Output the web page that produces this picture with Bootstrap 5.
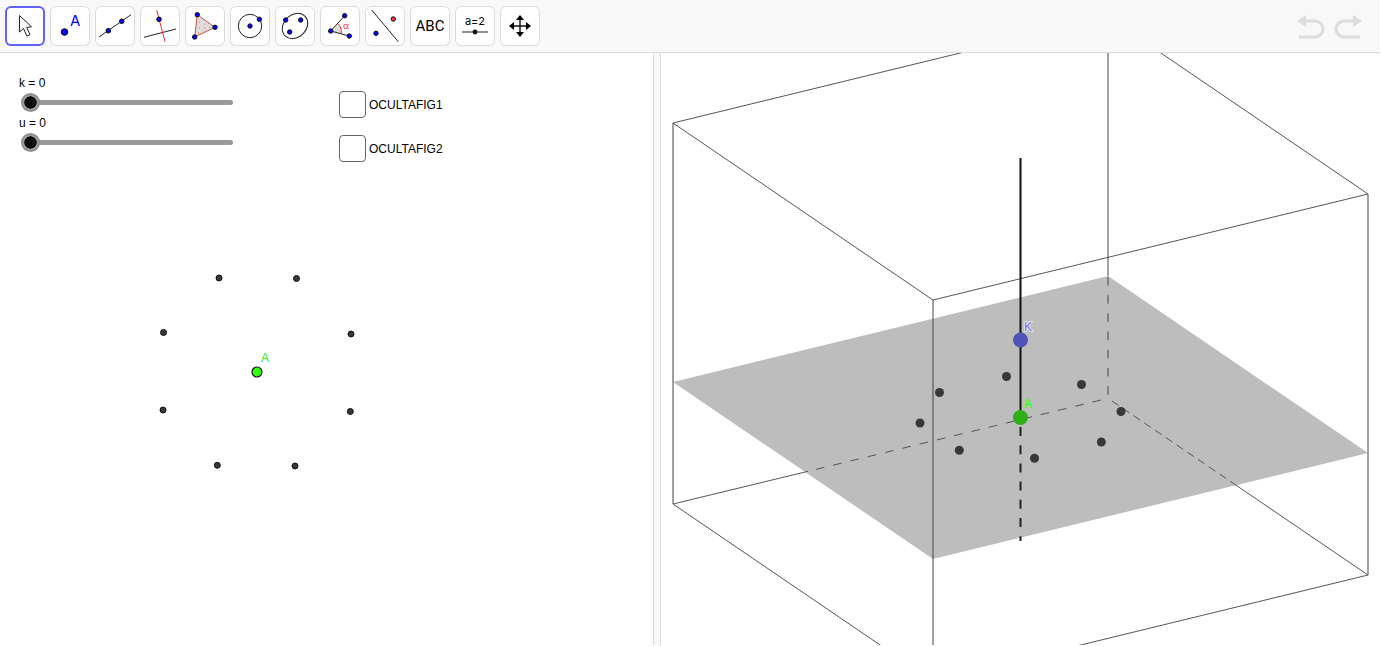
<!DOCTYPE html>
<html lang="es">
<head>
<meta charset="utf-8">
<meta name="viewport" content="width=device-width, initial-scale=1">
<title>Vista gráfica y 3D</title>
<link href="https://cdn.jsdelivr.net/npm/bootstrap@5.3.0/dist/css/bootstrap.min.css" rel="stylesheet">
<style>
  body { font-family: "Liberation Sans", Arial, sans-serif; font-size: 12px; line-height: 16px; color: #000; background: #fff; }
  .workspace { height: 100vh; padding: 0 2px 2px 0; }
  .toolbar { background: #f8f8f8; border-bottom: 1px solid #dcdcdc; padding: 6px 18px 6px 5px; }
  .tools { gap: 5px; }
  .tool { width: 40px; height: 40px; border: 0; border-radius: 6px; background: #fff; box-shadow: inset 0 0 0 1px #dcdcdc; }
  .tool.selected { box-shadow: inset 0 0 0 2px #6161ff; }
  .tool svg { width: 40px; height: 40px; display: block; }
  .tool text { font-family: Roboto, sans-serif; }
  .tool .point-name { font-family: Inter, sans-serif; }
  .history { gap: 9px; padding-top: 2px; }
  .history button { border: 0; background: none; }
  .history svg { display: block; }
  .ink { stroke: #222; fill: none; stroke-width: 1; }
  .dot { fill: #00f; stroke: #111; stroke-width: 1; }
  .view2d { flex: 653 1 0; overflow: hidden; }
  .view3d { flex: 719 1 0; overflow: hidden; }
  .splitter { width: 8px; background: #f8f8f8; border: solid #dcdcdc; border-width: 0 1px; }
  .views { min-height: 0; }
  .board { position: absolute; inset: 0; width: 100%; height: 100%; pointer-events: none; }
  .controls { position: relative; padding: 22px 19px; gap: 106px; }
  .sliders { width: 214px; gap: 3px; }
  .slider { -webkit-appearance: none; appearance: none; display: block; width: 211px; height: 19px; margin: 2px 0 0 3px; padding: 0; background: none; }
  .slider::-webkit-slider-runnable-track { height: 5px; border-radius: 3px; background: #999; }
  .slider::-webkit-slider-thumb { -webkit-appearance: none; width: 17px; height: 17px; margin-top: -6px; border-radius: 50%; border: 2px solid #999; background: #0a0a0a; background-clip: padding-box; box-shadow: 0 0 0 1px #888; }
  .checks { gap: 17px; padding-top: 16px; }
  .check-row { gap: 3px; }
  .tick { -webkit-appearance: none; appearance: none; width: 27px; height: 27px; margin: 0; border: 1px solid #666; border-radius: 4px; background: #fff; }
  .tick:checked { background: #999; }
  .edge { stroke: #555; stroke-width: 1; fill: none; }
  .upright { stroke: #444; }
</style>
</head>
<body>
<div class="workspace d-flex flex-column">
  <header class="toolbar d-flex align-items-center justify-content-between">
    <div class="tools d-flex" role="toolbar" aria-label="Herramientas">
      <button class="tool selected p-0" aria-label="Elige y mueve"><svg viewBox="0 0 40 40"><path class="ink" stroke-width="1.2" d="M14.5 9.5V26l4-3.5 3.4 7.6 3.1-1.4-3.3-7.3 4.8-.6z"/></svg></button>
      <button class="tool p-0" aria-label="Punto"><svg viewBox="0 0 40 40"><circle class="dot" cx="14.5" cy="26" r="3.3"/><text class="point-name" x="20" y="20" font-size="15" fill="#00f">A</text></svg></button>
      <button class="tool p-0" aria-label="Recta"><svg viewBox="0 0 40 40"><path class="ink" d="M4 31 36 8.7"/><circle class="dot" cx="13.3" cy="24.7" r="2.3"/><circle class="dot" cx="26.7" cy="15.3" r="2.3"/></svg></button>
      <button class="tool p-0" aria-label="Perpendicular"><svg viewBox="0 0 40 40"><path class="ink" d="M4 31.3 36 23"/><path d="M16.7 4 25 35.7" stroke="#f03030" fill="none"/><circle class="dot" cx="19" cy="13.3" r="2.3"/></svg></button>
      <button class="tool p-0" aria-label="Polígono"><svg viewBox="0 0 40 40"><path d="M12.3 8.7 30 21.3 9.7 31z" fill="#ddd" stroke="#c0583c"/><path d="M14 16h1m4 2h1m-6 4h1m4 0h1m4-1h1m-12 6h1m4-1h1" stroke="#f66"/><circle class="dot" cx="12.3" cy="8.7" r="2.2"/><circle class="dot" cx="30" cy="21.3" r="2.2"/><circle class="dot" cx="9.7" cy="31" r="2.2"/></svg></button>
      <button class="tool p-0" aria-label="Circunferencia"><svg viewBox="0 0 40 40"><circle class="ink" cx="20" cy="20" r="11.7"/><circle class="dot" cx="20" cy="20" r="2.2"/><circle class="dot" cx="29.3" cy="13.3" r="2.2"/></svg></button>
      <button class="tool p-0" aria-label="Elipse"><svg viewBox="0 0 40 40"><ellipse class="ink" cx="20" cy="20" rx="14" ry="11.2" transform="rotate(-45 20 20)"/><circle class="dot" cx="10.7" cy="14" r="2.2"/><circle class="dot" cx="25.7" cy="14" r="2.2"/><circle class="dot" cx="14.7" cy="26" r="2.2"/></svg></button>
      <button class="tool p-0" aria-label="Ángulo"><svg viewBox="0 0 40 40"><path d="M10.7 25l7.3-7.5q4 4 3.3 10.2z" fill="#ddd"/><path d="M18 17.5q4 4 3.3 10.2" fill="none" stroke="#f03030"/><path class="ink" d="M24.7 9.7 10.7 25 29.3 30"/><circle class="dot" cx="24.7" cy="9.7" r="2.2"/><circle class="dot" cx="10.7" cy="25" r="2.2"/><circle class="dot" cx="29.3" cy="30" r="2.2"/><text class="point-name" x="23" y="23" font-size="9" fill="#f03030">α</text></svg></button>
      <button class="tool p-0" aria-label="Simetría axial"><svg viewBox="0 0 40 40"><path class="ink" d="M6.7 4 33.3 35.7"/><circle class="dot" style="fill:#f33" cx="28.3" cy="13" r="2.2"/><circle class="dot" cx="11" cy="27.3" r="2.2"/></svg></button>
      <button class="tool p-0" aria-label="Texto"><svg viewBox="0 0 40 40"><text x="20" y="25" font-size="15" text-anchor="middle">ABC</text></svg></button>
      <button class="tool p-0" aria-label="Deslizador"><svg viewBox="0 0 40 40"><text class="point-name" x="20" y="19" font-size="11" text-anchor="middle">a=2</text><path d="M7 26h26" stroke="#555" stroke-width="1.3"/><circle cx="20" cy="26" r="2.4" fill="#111"/></svg></button>
      <button class="tool p-0" aria-label="Desplaza vista gráfica"><svg viewBox="0 0 40 40"><path d="M13 20h14M20 13v14" stroke="#111" stroke-width="1.4"/><path d="M20 9l4 5h-8zM20 31l4-5h-8zM9 20l5-4v8zM31 20l-5-4v8z"/></svg></button>
    </div>
    <div class="history d-flex">
      <button class="p-0" aria-label="Deshace"><svg width="28" height="24" viewBox="0 0 28 24"><path d="M8 6h10a8 8 0 0 1 0 16H2" fill="none" stroke="#dcdcdc" stroke-width="3"/><path d="M0 6 9 0v12z" fill="#dcdcdc"/></svg></button>
      <button class="p-0" aria-label="Rehace"><svg width="28" height="24" viewBox="0 0 28 24"><path d="M20 6H10a8 8 0 0 0 0 16h16" fill="none" stroke="#dcdcdc" stroke-width="3"/><path d="M28 6 19 0v12z" fill="#dcdcdc"/></svg></button>
    </div>
  </header>

  <main class="views d-flex flex-grow-1">
    <section class="view2d position-relative" aria-label="Vista gráfica">
      <svg class="board">
        <g fill="#37383c" stroke="#111">
          <circle cx="219" cy="225" r="3"/><circle cx="296.5" cy="225.5" r="3"/>
          <circle cx="163.5" cy="279.5" r="3"/><circle cx="351" cy="281" r="3"/>
          <circle cx="163" cy="357" r="3"/><circle cx="350.3" cy="358.5" r="3"/>
          <circle cx="217.3" cy="412.3" r="3"/><circle cx="295" cy="413" r="3"/>
        </g>
        <circle cx="257" cy="319" r="5" fill="#3f1" stroke="#111" stroke-width="1.2"/>
        <text x="261" y="309" font-size="12" fill="#3e1">A</text>
      </svg>
      <div class="controls d-flex align-items-start">
        <div class="sliders d-flex flex-column flex-shrink-0">
          <div><label class="d-block" for="k">k = 0</label><input class="slider" type="range" id="k" min="0" max="10" value="0"></div>
          <div><label class="d-block" for="u">u = 0</label><input class="slider" type="range" id="u" min="0" max="10" value="0"></div>
        </div>
        <div class="checks d-flex flex-column">
          <div class="check-row d-flex align-items-center"><input class="tick" type="checkbox" id="f1"><label for="f1">OCULTAFIG1</label></div>
          <div class="check-row d-flex align-items-center"><input class="tick" type="checkbox" id="f2"><label for="f2">OCULTAFIG2</label></div>
        </div>
      </div>
    </section>
    <div class="splitter flex-shrink-0"></div>
    <section class="view3d position-relative" aria-label="Vista 3D">
      <svg class="board">
        <!-- base plane -->
        <path d="M12 329 272 506 707 400 447 223z" fill="#bdbdbd"/>
        <!-- hidden edges -->
        <path class="edge" d="M440 347 147 418.3" stroke-dasharray="8.7 9.1"/>
        <path class="edge" d="M451 348 574 431.5" stroke-dasharray="8 5"/>
        <path class="edge upright" d="M447 224V345" stroke-dasharray="8.5 9.7"/>
        <!-- visible edges -->
        <path class="edge" d="M147 418.3 12 451 272 628 707 522 574 431.5"/>
        <path class="edge" d="M12 70 272 247 707 141 447-36z"/>
        <path class="edge upright" d="M12 70V451M272 247V628M707 141V522M447 0V223"/>
        <!-- vertical axis -->
        <path d="M359.5 105V364" stroke="#111" stroke-width="2"/>
        <path d="M359.5 374V488" stroke="#222" stroke-width="2" stroke-dasharray="9 9.2"/>
        <g fill="#37383c">
          <circle cx="278.5" cy="339.5" r="4.5"/><circle cx="345.5" cy="323.5" r="4.5"/>
          <circle cx="420.5" cy="331.5" r="4.5"/><circle cx="460" cy="358.5" r="4.5"/>
          <circle cx="440.3" cy="389" r="4.5"/><circle cx="373.5" cy="405.3" r="4.5"/>
          <circle cx="298.3" cy="397.3" r="4.5"/><circle cx="259" cy="370" r="4.5"/>
        </g>
        <circle cx="359.5" cy="287" r="7.5" fill="#5151b8"/>
        <circle cx="359.5" cy="364.5" r="7.5" fill="#30ae15"/>
        <g font-size="12">
          <text x="363" y="278" fill="#7070f4" stroke="#e2e2e2" stroke-width="2" paint-order="stroke">K</text>
          <text x="363" y="355" fill="#3f1" stroke="#8fe080" stroke-width="1" paint-order="stroke">A</text>
        </g>
      </svg>
    </section>
  </main>
</div>
<script src="https://cdn.jsdelivr.net/npm/bootstrap@5.3.0/dist/js/bootstrap.bundle.min.js"></script>
</body>
</html>
